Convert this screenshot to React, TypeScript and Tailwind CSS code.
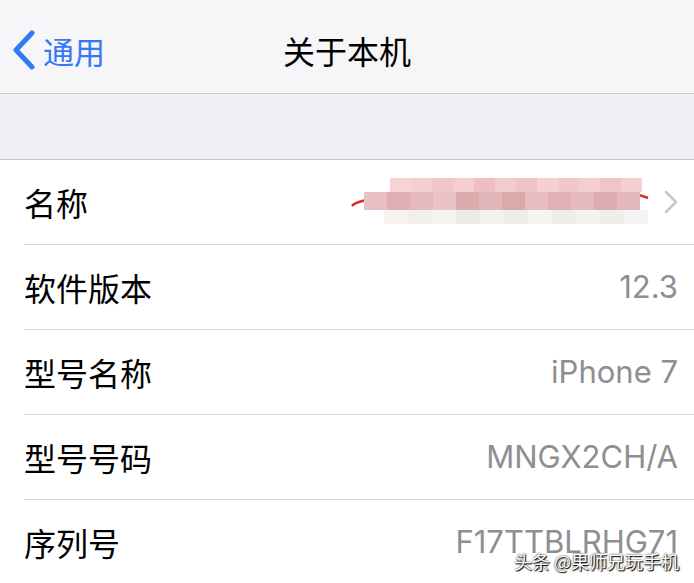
import React from "react";

const rows = [
  { label: "软件版本", value: "12.3" },
  { label: "型号名称", value: "iPhone 7" },
  { label: "型号号码", value: "MNGX2CH/A" },
  { label: "序列号", value: "F17TTBLRHG71" },
];

const topBlocks = ["#f6d3d4", "#f4cfd0", "#f0c6c8", "#f3cdcf", "#edbfc1", "#f2cbcd", "#eec3c5", "#f5d0d1", "#f1c8ca", "#f4cdce", "#efc5c7", "#f3cfd0"];
const midBlocks = ["#e9c0c2", "#dfb0b3", "#e5b9bb", "#ecc3c5", "#dcabae", "#e2b5b8", "#d9a9ac", "#e7bdbf", "#dfb1b4", "#e6babd", "#ddaeb1", "#e4b8ba"];
const lowBlocks = ["#f7f3f3", "#f1eeee", "#f5f2f2", "#ece9e9", "#f3f0f0", "#eeebeb", "#f6f3f3", "#efecec", "#f4f1f1", "#f0eded", "#f6f4f4"];

const cjk = "font-['PingFang_SC','Noto_Sans_CJK_SC',sans-serif]";

const BlurredName = () => (
  <div className="relative h-[52px] w-[300px]">
    <svg className="absolute left-0 top-0" width="300" height="52" viewBox="0 0 300 52">
      <path d="M2 30 C 8 22, 60 16, 150 14 C 225 12, 280 14, 298 22" fill="none" stroke="#e0262b" strokeWidth="2.5" />
    </svg>
    <div className="absolute left-[14px] top-[2px] flex flex-col">
      <div className="flex pl-[26px]">
        {topBlocks.map((c, i) => (
          <div key={i} className="h-[14px] w-[21px]" style={{ backgroundColor: c }} />
        ))}
      </div>
      <div className="flex">
        {midBlocks.map((c, i) => (
          <div key={i} className="h-[18px] w-[23px]" style={{ backgroundColor: c }} />
        ))}
      </div>
      <div className="flex pl-[20px]">
        {lowBlocks.map((c, i) => (
          <div key={i} className="h-[14px] w-[24px]" style={{ backgroundColor: c }} />
        ))}
      </div>
    </div>
  </div>
);

export default function App() {
  return (
    <div className="relative h-[583px] w-[694px] overflow-hidden bg-white">
      {/* nav bar */}
      <div className="relative flex h-[94px] items-center justify-center border-b border-[#c8c7cc] bg-[#f6f6f8] pt-[6px]">
        <div className="absolute left-[11px] top-[30px] flex items-center gap-[6px] text-[#3478f6]">
          <svg width="26" height="40" viewBox="0 0 26 40">
            <path d="M21 3 L5 20 L21 37" fill="none" stroke="#3478f6" strokeWidth="5" strokeLinecap="round" strokeLinejoin="round" />
          </svg>
          <span className={`${cjk} text-[31px] leading-none`}>通用</span>
        </div>
        <span className={`${cjk} text-[32px] leading-none text-black`}>关于本机</span>
      </div>

      {/* spacer */}
      <div className="h-[66px] border-b border-[#c8c7cc] bg-[#efeff4]" />

      {/* list */}
      <div className="flex flex-col pl-[24px]">
        <div className="flex h-[85px] items-center border-b border-[#d8d8dc] pr-[16px]">
          <span className={`${cjk} text-[32px] text-black`}>名称</span>
          <div className="ml-auto flex items-center gap-[14px]">
            <BlurredName />
            <svg width="14" height="24" viewBox="0 0 14 24">
              <path d="M2 2 L12 12 L2 22" fill="none" stroke="#c7c7cc" strokeWidth="2.5" strokeLinecap="round" strokeLinejoin="round" />
            </svg>
          </div>
        </div>
        {rows.map((r) => (
          <div key={r.label} className="flex h-[85px] items-center border-b border-[#d8d8dc] pr-[16px]">
            <span className={`${cjk} text-[32px] text-black`}>{r.label}</span>
            <span className="ml-auto font-['Inter',sans-serif] text-[31px] text-[#8e8e93]">{r.value}</span>
          </div>
        ))}
      </div>

      {/* watermark */}
      <div
        className={`${cjk} absolute bottom-[13px] right-[15px] text-[18px] leading-none text-white [text-shadow:0_0_2px_#000,1px_1px_1px_#000]`}
      >
        头条 @果师兄玩手机
      </div>
    </div>
  );
}
